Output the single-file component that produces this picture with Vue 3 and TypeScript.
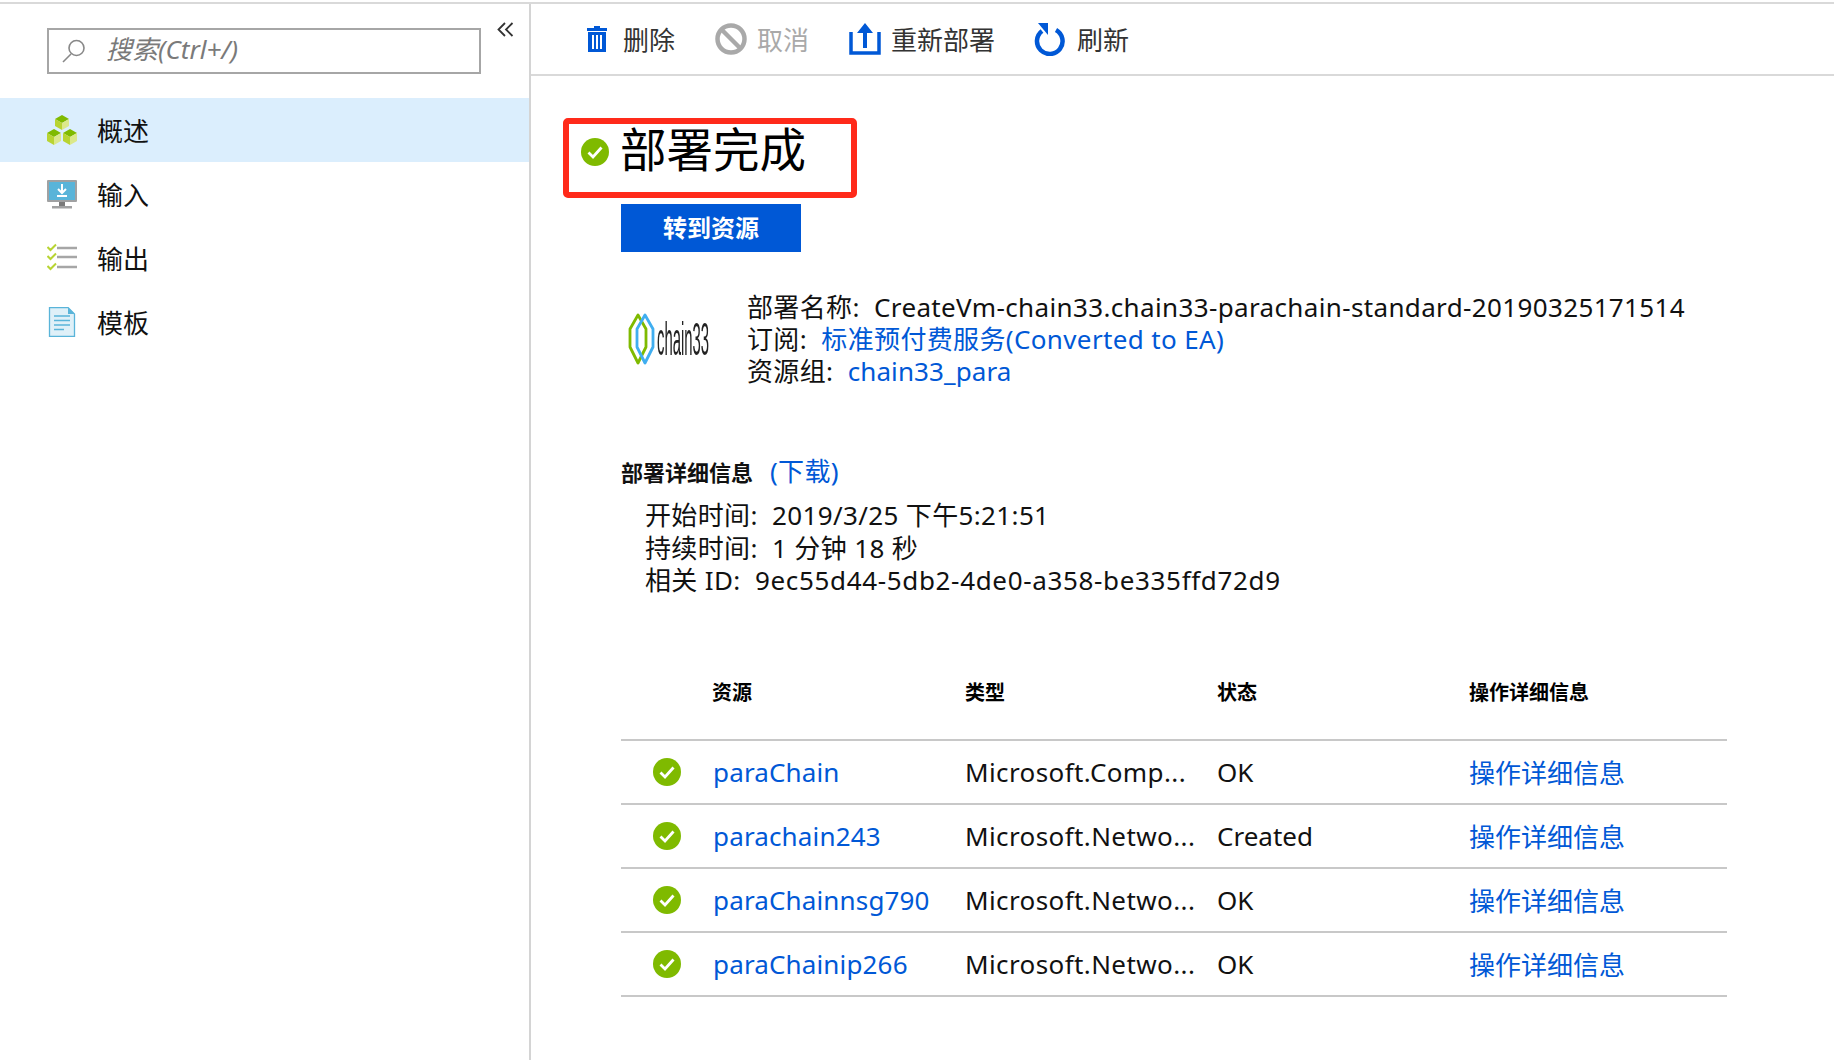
<script setup lang="ts">
interface Row {
  name: string;
  type: string;
  status: string;
}

const rows: Row[] = [
  { name: 'paraChain', type: 'Microsoft.Comp...', status: 'OK' },
  { name: 'parachain243', type: 'Microsoft.Netwo...', status: 'Created' },
  { name: 'paraChainnsg790', type: 'Microsoft.Netwo...', status: 'OK' },
  { name: 'paraChainip266', type: 'Microsoft.Netwo...', status: 'OK' },
];
</script>

<template>
  <div class="page">
    <!-- Sidebar -->
    <aside class="side">
      <div class="search-row">
        <div class="search">
          <svg class="search-icon" width="26" height="26" viewBox="0 0 26 26">
            <circle cx="15.5" cy="10" r="7.5" fill="none" stroke="#888" stroke-width="1.6" />
            <path d="M10 16 L2 24" stroke="#888" stroke-width="1.6" fill="none" />
          </svg>
          <span class="search-text">搜索(Ctrl+/)</span>
        </div>
        <svg class="collapse" width="18" height="18" viewBox="0 0 18 18">
          <path d="M8 2 L1.5 8.5 L8 15 M15.5 2 L9 8.5 L15.5 15" fill="none" stroke="#333" stroke-width="1.8" />
        </svg>
      </div>

      <nav class="nav">
        <div class="nav-item active">
          <svg class="nav-icon" width="30" height="30" viewBox="0 0 30 30">
            <path d="M15 0 L22 4 L15 8 L8 4 Z" fill="#7fba00" />
            <path d="M8 4 L15 8 V15 L8 11 Z" fill="#b8d432" />
            <path d="M22 4 L15 8 V15 L22 11 Z" fill="#dbe88a" />
            <path d="M7 14 L14 18 L7 22 L0 18 Z" fill="#7fba00" />
            <path d="M0 18 L7 22 V30 L0 26 Z" fill="#b8d432" />
            <path d="M14 18 L7 22 V30 L14 26 Z" fill="#dbe88a" />
            <path d="M23 14 L30 18 L23 22 L16 18 Z" fill="#7fba00" />
            <path d="M16 18 L23 22 V30 L16 26 Z" fill="#b8d432" />
            <path d="M30 18 L23 22 V30 L30 26 Z" fill="#dbe88a" />
          </svg>
          <span>概述</span>
        </div>
        <div class="nav-item">
          <svg class="nav-icon" width="30" height="30" viewBox="0 0 30 30">
            <rect x="0" y="1" width="30" height="22" rx="1" fill="#a0a1a2" />
            <rect x="2" y="3" width="26" height="18" fill="#59b4d9" />
            <path d="M15 5 V13 M11 10 L15 14 L19 10" fill="none" stroke="#fff" stroke-width="2" />
            <rect x="10" y="16" width="10" height="2" fill="#fff" />
            <rect x="12" y="23" width="6" height="4" fill="#7a7a7a" />
            <rect x="5" y="27" width="20" height="2.5" fill="#a0a1a2" />
          </svg>
          <span>输入</span>
        </div>
        <div class="nav-item">
          <svg class="nav-icon" width="30" height="30" viewBox="0 0 30 30">
            <path d="M0.500 4 L3.500 7 L9 1.500 M0.500 13 L3.500 16 L9 10.500 M0.500 23 L3.500 26 L9 20.500" fill="none" stroke="#b8d432" stroke-width="2" />
            <path d="M10 5 H30 M10 14 H30 M10 24 H30" stroke="#a6a6a6" stroke-width="2.500" />
          </svg>
          <span>输出</span>
        </div>
        <div class="nav-item">
          <svg class="nav-icon" width="30" height="30" viewBox="0 0 30 30">
            <path d="M2.500 0.500 H21 L27.500 7 V29.500 H2.500 Z" fill="#dff0f8" stroke="#59b4d9" stroke-width="1.300" />
            <path d="M21 0.500 V7 H27.500 Z" fill="#59b4d9" />
            <path d="M7 9 H23 M7 13.500 H23 M7 18 H23 M7 22.500 H17" stroke="#59b4d9" stroke-width="1.500" />
          </svg>
          <span>模板</span>
        </div>
      </nav>
    </aside>

    <!-- Main -->
    <main class="main">
      <div class="toolbar">
        <div class="tool tool-delete">
          <svg width="22" height="28" viewBox="0 0 22 28">
            <path d="M8 1 H14 V3 H21 V6 H1 V3 H8 Z" fill="#0058d6" />
            <path d="M2 7 H20 V27 H2 Z M6 10 V24 H8 V10 Z M10 10 V24 H12 V10 Z M14 10 V24 H16 V10 Z" fill="#0058d6" fill-rule="evenodd" />
          </svg>
          <span>删除</span>
        </div>
        <div class="tool tool-cancel disabled">
          <svg width="32" height="32" viewBox="0 0 32 32">
            <circle cx="16" cy="16" r="13.500" fill="none" stroke="#a9a9a9" stroke-width="4.500" />
            <path d="M7 7 L25 25" stroke="#a9a9a9" stroke-width="4.500" />
          </svg>
          <span>取消</span>
        </div>
        <div class="tool tool-redeploy">
          <svg width="32" height="32" viewBox="0 0 32 32">
            <path d="M2 9 V30 H30 V9" fill="none" stroke="#0058d6" stroke-width="3.500" />
            <path d="M16 0 L24 10 H18 V25 H14 V10 H8 Z" fill="#0058d6" />
          </svg>
          <span>重新部署</span>
        </div>
        <div class="tool tool-refresh">
          <svg width="32" height="33" viewBox="0 0 32 33">
            <path d="M22 7 A12.800 12.800 0 1 1 8 8" fill="none" stroke="#0058d6" stroke-width="4.500" />
            <path d="M4 0 H14 V12 Z" fill="#0058d6" />
          </svg>
          <span>刷新</span>
        </div>
      </div>

      <div class="content">
        <div class="title-box">
          <svg width="28" height="28" viewBox="0 0 28 28">
            <circle cx="14" cy="14" r="14" fill="#7fba00" />
            <path d="M7.500 14.500 L12 19 L20.500 9.500" fill="none" stroke="#fff" stroke-width="2.800" />
          </svg>
          <h1>部署完成</h1>
        </div>

        <button class="btn-go">转到资源</button>

        <div class="summary">
          <svg class="logo" width="82" height="52" viewBox="0 0 82 52">
            <path d="M10 2 L18 16 V34 L10 50 L2 34 V16 Z" fill="none" stroke="#7fba00" stroke-width="2.800" stroke-linejoin="round" />
            <path d="M17 2 L25 16 V34 L17 50 L9 34 V16 Z" fill="none" stroke="#40aef0" stroke-width="2.800" stroke-linejoin="round" />
            <text transform="translate(29 42) scale(0.323 1)" class="logo-text">chain33</text>
          </svg>
          <div class="summary-text">
            <div>部署名称:&nbsp;&nbsp;CreateVm-chain33.chain33-parachain-standard-20190325171514</div>
            <div>订阅:&nbsp;&nbsp;<a class="link">标准预付费服务(Converted to EA)</a></div>
            <div>资源组:&nbsp;&nbsp;<a class="link rg">chain33_para</a></div>
          </div>
        </div>

        <div class="details-head">
          <b>部署详细信息</b>
          <a class="link">(下载)</a>
        </div>
        <div class="details">
          <div>开始时间:&nbsp;&nbsp;2019/3/25 下午5:21:51</div>
          <div>持续时间:&nbsp;&nbsp;1 分钟 18 秒</div>
          <div>相关 ID:&nbsp;&nbsp;<span class="corr-id">9ec55d44-5db2-4de0-a358-be335ffd72d9</span></div>
        </div>

        <table class="res">
          <thead>
            <tr>
              <th class="c-icon"></th>
              <th class="c-name">资源</th>
              <th class="c-type">类型</th>
              <th class="c-status">状态</th>
              <th>操作详细信息</th>
            </tr>
          </thead>
          <tbody>
            <tr v-for="row in rows" :key="row.name">
              <td class="c-icon">
                <svg width="28" height="28" viewBox="0 0 28 28">
                  <circle cx="14" cy="14" r="14" fill="#7fba00" />
                  <path d="M7.500 14.500 L12 19 L20.500 9.500" fill="none" stroke="#fff" stroke-width="2.800" />
                </svg>
              </td>
              <td class="td-name"><a class="link">{{ row.name }}</a></td>
              <td class="td-type">{{ row.type }}</td>
              <td>{{ row.status }}</td>
              <td><a class="link">操作详细信息</a></td>
            </tr>
          </tbody>
        </table>
      </div>
    </main>
  </div>
</template>

<style>
html, body { margin: 0; background: #fff; }
</style>

<style scoped>
.page {
  height: 1056px;
  margin-top: 2px;
  border-top: 2px solid #d9d9d9;
  display: flex;
  overflow: hidden;
  font-family: 'Noto Sans', 'Noto Sans CJK SC', sans-serif;
  font-size: 26px;
  color: #111;
}

.side { width: 529px; border-right: 2px solid #d4d4d4; flex-shrink: 0; }

.search-row { display: flex; padding: 24px 0 0 47px; height: 70px; }
.search {
  width: 434px;
  height: 46px;
  box-sizing: border-box;
  border: 2px solid #a6a6a6;
  display: flex;
  align-items: center;
  padding-left: 12px;
}
.search-text { margin: -6px 0 0 19px; font-style: italic; color: #7a7a7a; font-size: 26px; }
.collapse { margin: -7px 0 0 16px; }

.nav-item { height: 64px; display: flex; align-items: center; padding-left: 47px; }
.nav-item.active { background: #dbeefd; }
.nav-icon { margin-right: 20px; }

.main { flex: 1; min-width: 0; }

.toolbar {
  height: 72px;
  box-sizing: border-box;
  border-bottom: 2px solid #d9d9d9;
  display: flex;
  align-items: center;
  padding-left: 55px;
  color: #333;
}
.tool { display: flex; align-items: center; gap: 10px; margin-right: 38px; }
.tool-delete { gap: 15px; margin-right: 40px; }
.tool-cancel { gap: 10px; margin-right: 40px; }
.tool-redeploy { gap: 10px; margin-right: 39px; }
.tool-refresh { gap: 11px; }
.tool.disabled { color: #a9a9a9; }

.content { padding: 42px 0 0 32px; }

.title-box {
  width: 294px;
  height: 80px;
  box-sizing: border-box;
  border: 6px solid #ff2a1a;
  border-radius: 5px;
  display: flex;
  align-items: center;
  padding: 0 0 12px 12px;
}
.title-box h1 { margin: 0 0 6px 11px; font-size: 46.500px; font-weight: 400; color: #000; line-height: 1; }

.btn-go {
  display: block;
  margin: 6px 0 0 58px;
  width: 180px;
  height: 48px;
  padding: 0 0 3px;
  border: none;
  background: #0058d6;
  color: #fff;
  font: 700 24px 'Noto Sans CJK SC', sans-serif;
}

.summary { display: flex; margin: 39px 0 0 65px; }
.logo { margin-top: 22px; filter: blur(0.5px); }
.logo-text { font: 400 46px 'Liberation Sans', sans-serif; fill: #222; }
.summary-text { margin-left: 37px; line-height: 32px; letter-spacing: 0.36px; }
.summary-text .rg { letter-spacing: 0.1px; }

.link { color: #0058d6; }

.details-head { margin: 66px 0 0 58px; height: 36px; line-height: 36px; }
.details-head b { font-size: 22px; font-weight: 700; margin-right: 17px; }
.details-head .link { letter-spacing: 0.3px; }
.details { margin: 10px 0 0 82px; line-height: 32.500px; letter-spacing: 0.36px; }
.corr-id { letter-spacing: 0.66px; }

.res { margin: 71px 0 0 58px; width: 1106px; border-collapse: collapse; table-layout: fixed; }
.res th { height: 72px; padding: 0 0 24px 0; text-align: left; font-size: 20px; font-weight: 700; color: #000; border-bottom: 2px solid #c8c8c8; box-sizing: border-box; }
.res td { height: 64px; padding: 0; border-bottom: 2px solid #c8c8c8; box-sizing: border-box; white-space: nowrap; }
.res td svg { display: block; margin-left: 32px; }
.res td.td-name { padding-left: 1px; letter-spacing: 0.15px; }
.res td.td-type { letter-spacing: 0.4px; }
.c-icon { width: 91px; }
.c-name { width: 253px; }
.c-type { width: 252px; }
.c-status { width: 252px; }
</style>
